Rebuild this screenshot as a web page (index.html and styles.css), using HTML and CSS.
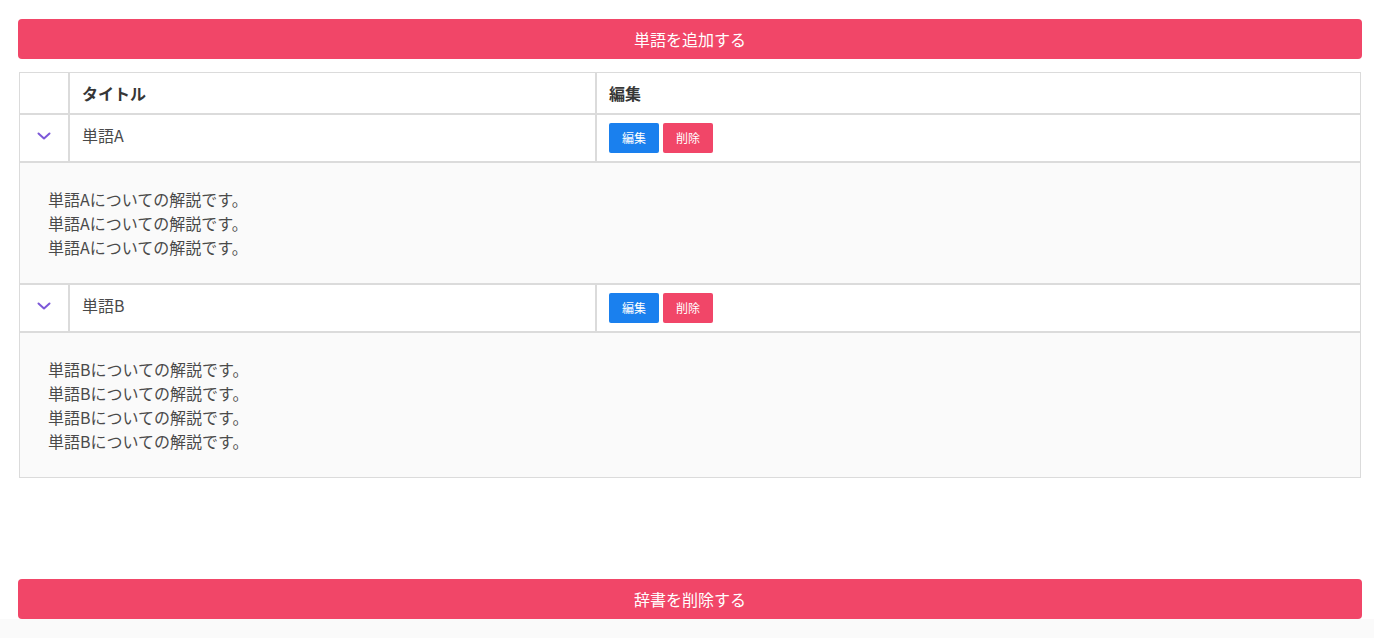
FILE: index.html
```html
<!DOCTYPE html>
<html lang="ja">
<head>
<meta charset="utf-8">
<title>辞書</title>
<link rel="stylesheet" href="styles.css">
</head>
<body>
<div class="page">
  <button class="wide-btn">単語を追加する</button>
  <table class="words">
    <colgroup>
      <col class="c-toggle">
      <col class="c-title">
      <col class="c-edit">
    </colgroup>
    <thead>
      <tr>
        <th></th>
        <th>タイトル</th>
        <th>編集</th>
      </tr>
    </thead>
    <tbody>
      <tr class="word-row">
        <td class="toggle"><svg class="chev" width="14" height="8" viewBox="0 0 14 8"><polyline points="1.5,1.5 7,6.5 12.5,1.5" fill="none" stroke="#7c58d8" stroke-width="2" stroke-linecap="round" stroke-linejoin="round"/></svg></td>
        <td>単語A</td>
        <td class="actions"><button class="sm-btn blue">編集</button><button class="sm-btn red">削除</button></td>
      </tr>
      <tr class="detail-row">
        <td colspan="3"><div class="detail">単語Aについての解説です。<br>単語Aについての解説です。<br>単語Aについての解説です。</div></td>
      </tr>
      <tr class="word-row">
        <td class="toggle"><svg class="chev" width="14" height="8" viewBox="0 0 14 8"><polyline points="1.5,1.5 7,6.5 12.5,1.5" fill="none" stroke="#7c58d8" stroke-width="2" stroke-linecap="round" stroke-linejoin="round"/></svg></td>
        <td>単語B</td>
        <td class="actions"><button class="sm-btn blue">編集</button><button class="sm-btn red">削除</button></td>
      </tr>
      <tr class="detail-row">
        <td colspan="3"><div class="detail">単語Bについての解説です。<br>単語Bについての解説です。<br>単語Bについての解説です。<br>単語Bについての解説です。</div></td>
      </tr>
    </tbody>
  </table>
  <button class="wide-btn bottom">辞書を削除する</button>
</div>
</body>
</html>
```

FILE: styles.css
```css
html {
  background: #fafafa;
  margin: 0;
  padding: 0;
}
body {
  margin: 0;
  padding: 0;
  font-family: "Noto Sans CJK JP", "Noto Sans", sans-serif;
  color: #4a4a4a;
  font-size: 16px;
  line-height: 24px;
}
.page {
  background: #fff;
  padding: 19px 12px 0 18px;
  display: flex;
  flex-direction: column;
}
.wide-btn {
  display: block;
  width: 100%;
  height: 40px;
  border: none;
  border-radius: 4px;
  background: #f14668;
  color: #fff;
  font-family: inherit;
  font-size: 16px;
  line-height: 24px;
  padding: 0;
  cursor: pointer;
}
.wide-btn.bottom {
  margin-top: 101px;
}
.words {
  margin: 13px 0 0 1px;
  width: 1342px;
  table-layout: fixed;
  border-collapse: separate;
  border-spacing: 0;
}
.c-toggle { width: 50px; }
.c-title { width: 527px; }
.c-edit { width: 765px; }
.words th,
.words td {
  border: 1px solid #dbdbdb;
  padding: 8px 12px;
  text-align: left;
  vertical-align: top;
  line-height: 24px;
}
.words th {
  color: #363636;
  font-weight: 700;
  height: 24px;
}
.words td.toggle {
  padding: 0;
  text-align: center;
  vertical-align: top;
}
.chev {
  display: block;
  margin: 17px auto 0;
}
.actions {
  display: table-cell;
}
.sm-btn {
  width: 50px;
  height: 30px;
  border: none;
  border-radius: 2px;
  color: #fff;
  font-family: inherit;
  font-size: 12px;
  line-height: 18px;
  padding: 0;
  margin-right: 4px;
  vertical-align: top;
  cursor: pointer;
}
.sm-btn.blue { background: #1a80ee; }
.sm-btn.red { background: #f14668; }
.words .detail-row td {
  background: #fafafa;
  padding: 24px 12px;
}
.detail {
  padding-left: 16px;
}
```
